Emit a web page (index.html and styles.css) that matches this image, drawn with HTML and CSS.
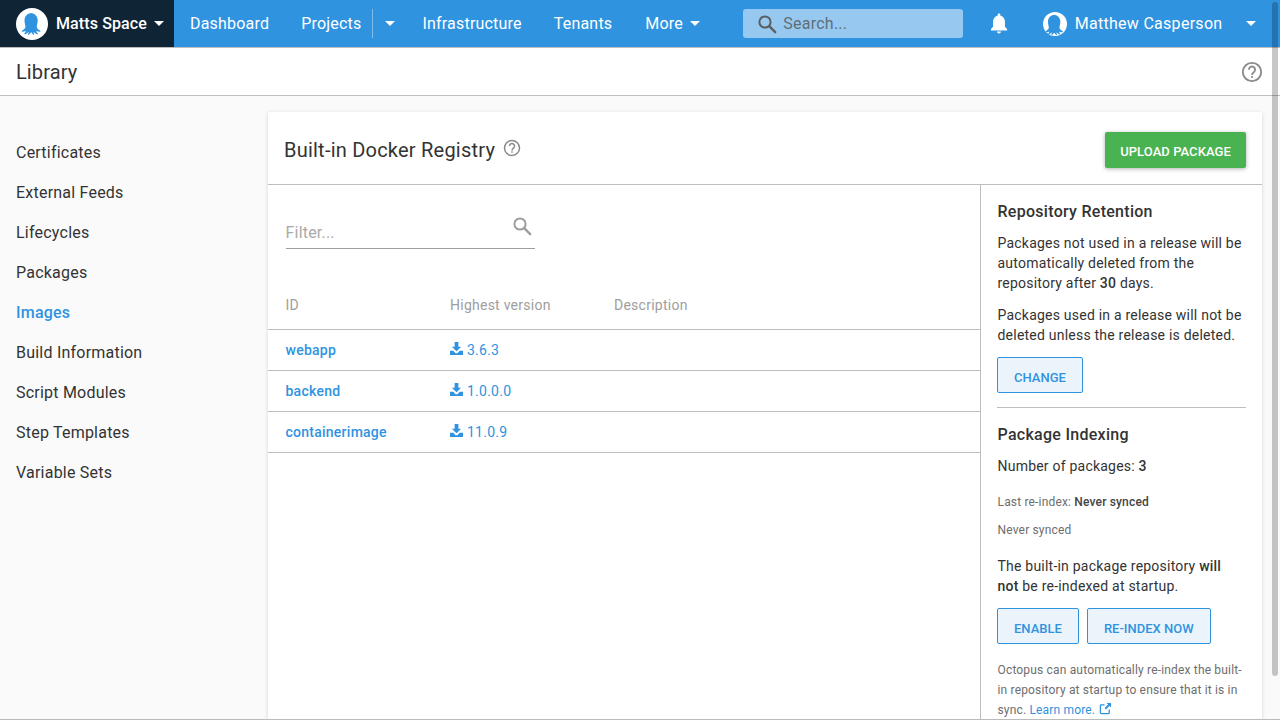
FILE: index.html
```html
<!DOCTYPE html>
<html lang="en">
<head>
<meta charset="utf-8">
<title>Library</title>
<link rel="stylesheet" href="styles.css">
</head>
<body>
<svg class="defs" width="0" height="0" aria-hidden="true">
  <symbol id="octo" viewBox="0 0 32 32">
    <path d="M16 5c-4.500 0-7.500 3.200-7.500 7.500 0 2.600.8 4.300.9 6 .1 1.800-1.200 3-3.400 4.200-.6.300-.3 1 .4 1 1.200 0 2.400-.3 3.300-.9.300.9-.6 2-1.300 2.700-.4.400.1.900.7.700 1.500-.4 2.600-1.300 3.400-2.400.2.900-.2 1.800-.5 2.400-.2.400.3.700.7.500 1.100-.6 1.900-1.500 2.400-2.600.5 1.100 1.300 2 2.400 2.600.4.200.9-.1.700-.5-.3-.6-.7-1.500-.5-2.400.8 1.100 1.900 2 3.400 2.400.6.200 1.100-.3.700-.7-.7-.7-1.600-1.800-1.300-2.700.9.600 2.100.9 3.300.9.700 0 1-.7.4-1-2.200-1.200-3.500-2.400-3.400-4.200.1-1.700.9-3.400.9-6 0-4.300-3-7.500-7.500-7.500z"/>
  </symbol>
  <symbol id="dl" viewBox="0 0 14 14">
    <path d="M5 0h4v5h3L7 10 2 5h3z"/>
    <path d="M0 9.500h3.500L6 12h2l2.500-2.500H14V14H0z"/>
  </symbol>
  <symbol id="mag" viewBox="0 0 20 20">
    <circle cx="8" cy="8" r="5.600" fill="none" stroke="currentColor" stroke-width="2"/>
    <path d="M12.200 12.200l6 6" fill="none" stroke="currentColor" stroke-width="2.400" stroke-linecap="round"/>
  </symbol>
  <symbol id="help" viewBox="0 0 24 24">
    <circle cx="12" cy="12" r="10" fill="none" stroke="currentColor" stroke-width="2"/>
    <path d="M8.600 9.500a3.400 3.400 0 1 1 5.400 2.700c-1.300 1-2 1.500-2 3.100" fill="none" stroke="currentColor" stroke-width="2"/>
    <rect x="11" y="16.400" width="2" height="2" fill="currentColor"/>
  </symbol>
</svg>

<header class="topbar">
  <div class="space">
    <span class="logo"><svg class="logo-svg"><use href="#octo"/></svg></span>
    <span class="space-name">Matts Space</span>
    <span class="caret caret-space"></span>
  </div>
  <nav class="nav">
    <a class="nav-item">Dashboard</a>
    <a class="nav-item nav-projects">Projects</a>
    <span class="nav-split"><span class="caret"></span></span>
    <a class="nav-item">Infrastructure</a>
    <a class="nav-item nav-tenants">Tenants</a>
    <a class="nav-item nav-more">More<span class="caret caret-more"></span></a>
  </nav>
  <div class="search">
    <svg class="search-icon"><use href="#mag"/></svg>
    <span class="search-text">Search...</span>
  </div>
  <svg class="bell" viewBox="0 0 16 20"><path d="M8 0.500c-.8 0-1.300.6-1.300 1.300v.6C4 3 2.600 5.300 2.600 8v4.400L.7 14.600v1.200h14.600v-1.200l-1.900-2.200V8c0-2.700-1.400-5-4.100-5.600v-.6C9.300 1.100 8.800.5 8 .5z"/><path d="M6.200 16.800h3.600c0 1-.8 1.800-1.800 1.800s-1.800-.8-1.800-1.800z"/></svg>
  <div class="user">
    <span class="avatar"><svg class="avatar-svg"><use href="#octo"/></svg></span>
    <span class="user-name">Matthew Casperson</span>
    <span class="caret caret-user"></span>
  </div>
</header>

<div class="subhead">
  <h1 class="subhead-title">Library</h1>
  <svg class="subhead-help"><use href="#help"/></svg>
</div>

<div class="main">
  <aside class="side">
    <a class="side-item">Certificates</a>
    <a class="side-item">External Feeds</a>
    <a class="side-item">Lifecycles</a>
    <a class="side-item">Packages</a>
    <a class="side-item side-active">Images</a>
    <a class="side-item">Build Information</a>
    <a class="side-item">Script Modules</a>
    <a class="side-item">Step Templates</a>
    <a class="side-item">Variable Sets</a>
  </aside>

  <section class="card">
    <div class="card-head">
      <h2 class="card-title">Built-in Docker Registry</h2>
      <svg class="card-help"><use href="#help"/></svg>
      <button class="btn-upload">UPLOAD PACKAGE</button>
    </div>
    <div class="card-body">
      <div class="list">
        <div class="filter">
          <span class="filter-text">Filter...</span>
          <svg class="filter-icon"><use href="#mag"/></svg>
        </div>
        <div class="row row-head">
          <span class="col-id">ID</span>
          <span class="col-ver">Highest version</span>
          <span>Description</span>
        </div>
        <div class="row">
          <a class="col-id pkg">webapp</a>
          <span class="col-ver ver"><svg class="dl"><use href="#dl"/></svg>3.6.3</span>
        </div>
        <div class="row">
          <a class="col-id pkg">backend</a>
          <span class="col-ver ver"><svg class="dl"><use href="#dl"/></svg>1.0.0.0</span>
        </div>
        <div class="row">
          <a class="col-id pkg">containerimage</a>
          <span class="col-ver ver"><svg class="dl"><use href="#dl"/></svg>11.0.9</span>
        </div>
      </div>
      <div class="panel">
        <h3 class="panel-title">Repository Retention</h3>
        <p class="para para-first">Packages not used in a release will be automatically deleted from the repository after <b>30</b> days.</p>
        <p class="para para-next">Packages used in a release will not be deleted unless the release is deleted.</p>
        <div class="btn-row btn-row-first"><button class="btn-out">CHANGE</button></div>
        <hr class="rule">
        <h3 class="panel-title">Package Indexing</h3>
        <p class="para para-count">Number of packages: <b>3</b></p>
        <p class="small small-first">Last re-index: <b>Never synced</b></p>
        <p class="small small-next">Never synced</p>
        <p class="para para-startup">The built-in package repository <b>will not</b> be re-indexed at startup.</p>
        <div class="btn-row btn-row-second"><button class="btn-out">ENABLE</button><button class="btn-out">RE-INDEX NOW</button></div>
        <p class="small note">Octopus can automatically re-index the built-in repository at startup to ensure that it is in sync. <a class="link">Learn more.</a> <svg class="ext" viewBox="0 0 14 14"><path d="M11 8v3.500a1 1 0 0 1-1 1H2.500a1 1 0 0 1-1-1V4a1 1 0 0 1 1-1H6" fill="none" stroke="currentColor" stroke-width="1.400"/><path d="M8 1h5v5l-1.800-1.800L7.500 8 6 6.500l3.800-3.700z"/></svg></p>
      </div>
    </div>
  </section>
</div>

<div class="scrollbar"><span class="thumb"></span></div>
</body>
</html>
```
FILE: styles.css
```css
* { box-sizing: border-box; }
html, body { margin: 0; height: 720px; overflow: hidden; }
body { font-family: Roboto, "Liberation Sans", sans-serif; font-size: 16px; color: #333; background: #fafafa; display: flex; flex-direction: column; border-bottom: 1px solid #bbb; }
.defs { position: absolute; }
h1, h2, h3, p { margin: 0; font-weight: 400; }
a { color: inherit; text-decoration: none; }
button { font-family: inherit; cursor: pointer; }
b { font-weight: 500; }

.topbar { flex: none; height: 48px; background: #2f93e0; border-bottom: 1px solid #bdbdbd; display: flex; align-items: center; color: #fff; }
.space { width: 174px; height: 47px; background: #0f2535; display: flex; align-items: center; padding-left: 16px; }
.logo { width: 32px; height: 32px; border-radius: 50%; background: #fff; display: flex; flex: none; }
.logo-svg { width: 32px; height: 32px; fill: #2f93e0; }
.space-name { margin-left: 8px; font-weight: 500; letter-spacing: .12px; }
.caret { display: inline-block; width: 0; height: 0; border-left: 5px solid transparent; border-right: 5px solid transparent; border-top: 5px solid #fff; }
.caret-space { margin-left: 7px; }
.nav { display: flex; align-items: center; height: 47px; padding-left: 16px; }
.nav-item { letter-spacing: .2px; margin-right: 32px; white-space: nowrap; display: flex; align-items: center; }
.nav-projects { margin-right: 11px; }
.nav-tenants { margin-right: 33px; }
.nav-split { height: 29px; border-left: 1px solid #7fbcea; width: 36px; margin-right: 14px; padding-left: 12px; display: flex; align-items: center; }
.nav-more { margin-right: 0; }
.caret-more { margin-left: 7.500px; }
.search { width: 220px; height: 29px; background: #97c9f0; border-radius: 3px; margin-left: 42.300px; display: flex; align-items: center; padding-left: 14px; color: #5f6e78; }
.search-icon { width: 20px; height: 20px; color: #5b5f62; flex: none; }
.search-text { margin-left: 6.500px; letter-spacing: .25px; }
.bell { width: 18px; height: 22px; fill: #fff; margin-left: 27px; flex: none; }
.user { display: flex; align-items: center; margin-left: 35px; }
.avatar { width: 24px; height: 24px; border-radius: 50%; background: #fff; display: flex; flex: none; overflow: hidden; }
.avatar-svg { width: 30px; height: 30px; fill: #2f93e0; flex: none; margin: -1.500px 0 0 -3px; }
.user-name { margin-left: 8px; letter-spacing: .28px; white-space: nowrap; }
.caret-user { margin-left: 24px; }

.subhead { flex: none; height: 48px; background: #fff; border-bottom: 1px solid #bdbdbd; display: flex; align-items: center; justify-content: space-between; padding: 0 17px 0 16px; }
.subhead-title { font-size: 20px; letter-spacing: .1px; }
.subhead-help { width: 22px; height: 22px; color: #8a8a8a; }

.main { flex: 1; min-height: 0; display: flex; }
.side { width: 268px; flex: none; padding: 37px 16px 0; display: flex; flex-direction: column; }
.side-item { height: 40px; line-height: 40px; letter-spacing: .22px; }
.side-active { color: #2f93e0; font-weight: 500; }

.card { width: 994px; margin-top: 16px; background: #fff; box-shadow: 0 1px 4px rgba(0,0,0,.16); display: flex; flex-direction: column; min-height: 0; }
.card-head { flex: none; height: 73px; border-bottom: 1px solid #bdbdbd; display: flex; align-items: center; padding: 0 16px; }
.card-title { font-size: 20px; letter-spacing: .225px; position: relative; top: 2px; }
.card-help { width: 18px; height: 18px; color: #8a8a8a; margin-left: 8px; }
.btn-upload { margin-left: auto; width: 141px; height: 36px; padding: 2px 0 0; background: #48b350; color: #fff; border: 0; border-radius: 2px; font-size: 13px; font-weight: 500; letter-spacing: .05px; box-shadow: 0 1px 4px rgba(0,0,0,.3); position: relative; top: 2px; }
.card-body { flex: 1; min-height: 0; display: flex; }

.list { width: 712px; flex: none; }
.filter { margin: 20px 0 0 18px; width: 249px; height: 44px; border-bottom: 1px solid #9e9e9e; display: flex; justify-content: space-between; }
.filter-text { color: #aaa; align-self: flex-end; padding-bottom: 6px; letter-spacing: .2px; margin-left: -.5px; }
.filter-icon { width: 20px; height: 20px; color: #9e9e9e; margin: 11px 3px 0 0; }
.row { height: 41px; border-bottom: 1px solid #bdbdbd; display: flex; align-items: center; font-size: 14px; letter-spacing: .25px; }
.row-head { height: 45px; margin-top: 36px; padding-bottom: 4px; color: #9e9e9e; }
.col-id { width: 164.500px; margin-left: 17.500px; flex: none; }
.col-ver { width: 164px; flex: none; }
.pkg { color: #2f93e0; font-weight: 500; }
.ver { color: #2f93e0; display: flex; align-items: center; }
.dl { width: 13px; height: 13px; fill: #2f93e0; margin-right: 4px; position: relative; top: -2px; }

.panel { flex: 1; min-width: 0; border-left: 1px solid #bdbdbd; padding: 16px 16px 0; font-size: 14px; }
.panel-title { font-size: 16px; font-weight: 500; line-height: 22px; letter-spacing: .28px; color: #333; margin-left: .5px; }
.para { line-height: 20px; letter-spacing: .22px; margin-left: .5px; }
.para-first { margin-top: 10px; }
.para-next { margin-top: 12px; }
.para-count { margin-top: 10px; }
.para-startup { margin-top: 16px; padding-right: 6px; }
.btn-row { display: flex; gap: 8px; }
.btn-row-first { margin-top: 12px; }
.btn-row-second { margin-top: 12px; }
.btn-out { height: 36px; padding: 4px 16px 0; background: #ecf4fb; border: 1px solid #2f93e0; border-radius: 2px; color: #2f93e0; font-size: 13px; font-weight: 500; }
.rule { border: 0; border-top: 1px solid #bdbdbd; margin: 14px 0 16px; }
.small { font-size: 12px; color: #6e6e6e; line-height: 20px; letter-spacing: .17px; margin-left: .5px; }
.small b { color: #444; }
.small-first { margin-top: 16px; }
.small-next { margin-top: 8px; }
.note { margin-top: 16px; }
.link { color: #2f93e0; }
.ext { width: 13px; height: 13px; fill: #2f93e0; color: #2f93e0; vertical-align: -1px; margin-left: 1px; }

.scrollbar { position: fixed; top: 0; right: 0; width: 10px; height: 720px; }
.thumb { position: absolute; top: 2px; left: 2px; width: 6px; height: 674px; border-radius: 3px; background: rgba(0,0,0,.22); }
```
